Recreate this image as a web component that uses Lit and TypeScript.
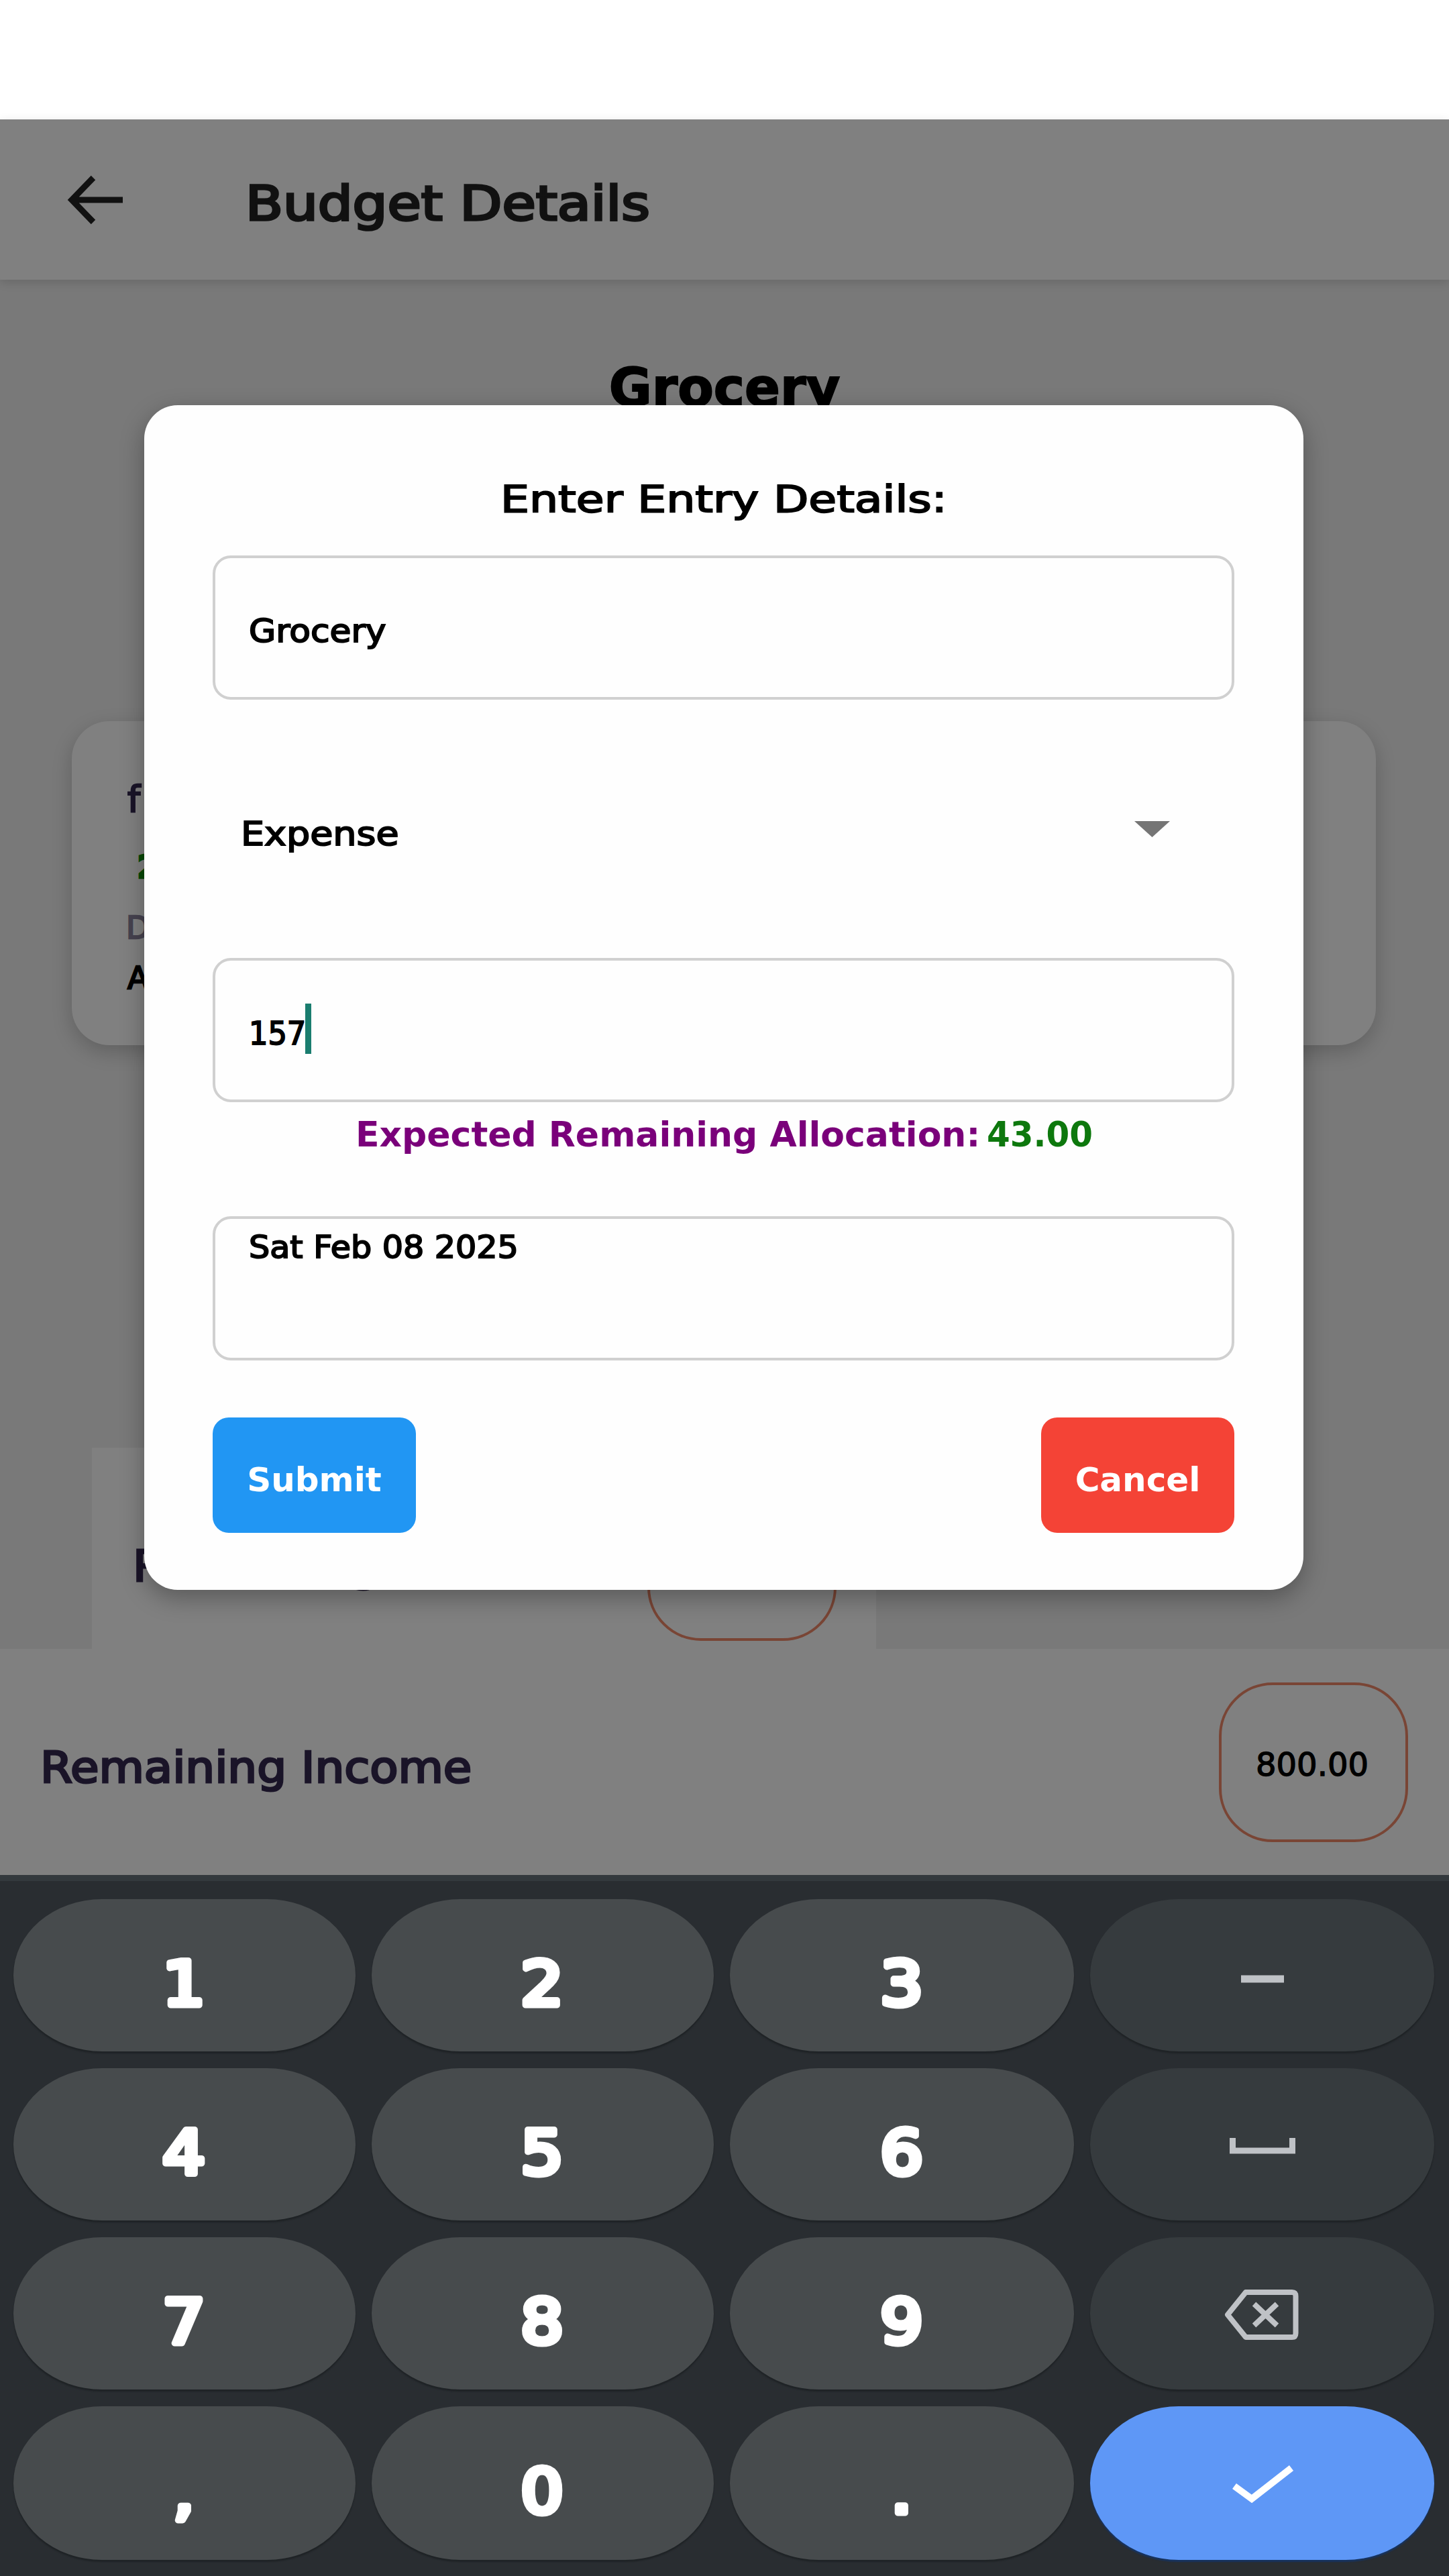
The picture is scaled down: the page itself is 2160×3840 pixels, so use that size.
import { LitElement, html, css, svg } from "lit";
import { customElement } from "lit/decorators.js";

const ICONS: Record<string, unknown> = {
  minus: svg`<path d="M68 65H132" stroke-width="11" />`,
  space: svg`<path d="M55.500 50V69H144.500V50" stroke-width="9" />`,
  backspace: svg`<path d="M75 28H144Q149.500 28 149.500 34V89Q149.500 95 144 95H75L48 61.500Z" stroke-width="8" stroke-linejoin="round" /><path d="M87.500 45.500L121.500 77.500M121.500 45.500L87.500 77.500" stroke-width="8" />`,
  check: svg`<path d="M58 64L84 83L143 37" stroke-width="10" />`,
};

const KEYS = [
  "1", "2", "3", "minus",
  "4", "5", "6", "space",
  "7", "8", "9", "backspace",
  ",", "0", ".", "check",
];

@customElement("number-pad")
class NumberPad extends LitElement {
  static styles = css`
    :host {
      display: grid;
      box-sizing: border-box;
      height: 1045px;
      padding: 27px 22px 0 20px;
      border-top: 9px solid #33393d;
      background: #292d31;
      grid-template-columns: 510px 510px 513px 513px;
      grid-template-rows: 227px 227px 227px 229px;
      gap: 25px 24px;
    }
    .key {
      display: flex;
      align-items: center;
      justify-content: center;
      box-sizing: border-box;
      border-radius: 132px / 50%;
      background: #474b4d;
      box-shadow: 0 3px 2px #1f2326;
      color: #fff;
    }
    .tool {
      background: #363b3e;
      color: #bfc2c6;
    }
    .enter {
      background: #5e97f6;
      color: #fff;
      box-shadow: 0 3px 2px #17335f;
    }
    .icon {
      width: 200px;
      height: 120px;
      fill: none;
      stroke: currentColor;
    }
    .digit {
      width: 200px;
      height: 227px;
      fill: currentColor;
      stroke: currentColor;
      stroke-width: 9px;
      stroke-linejoin: round;
      font: 91px "DejaVu Sans", sans-serif;
      text-anchor: middle;
    }
  `;
  render() {
    return KEYS.map((k) =>
      ICONS[k]
        ? html`<div class="key ${k === "check" ? "enter" : "tool"}"><svg class="icon" viewBox="0 0 200 120">${ICONS[k]}</svg></div>`
        : html`<div class="key">
            <svg class="digit" viewBox="0 0 200 227"><text transform="translate(99 158) scale(1.1 1)">${k}</text></svg>
          </div>`
    );
  }
}

@customElement("entry-dialog")
class EntryDialog extends LitElement {
  static styles = css`
    :host {
      display: flex;
      flex-direction: column;
      box-sizing: border-box;
      width: 1728px;
      height: 1766px;
      padding: 100px 103px 0 102px;
      border-radius: 50px;
      background: #fefefe;
      box-shadow: 0 12px 36px rgba(0, 0, 0, 0.3);
      color: #000;
      font-family: "DejaVu Sans", sans-serif;
      -webkit-text-stroke: 2px currentColor;
    }
    span {
      display: inline-block;
      white-space: nowrap;
      transform-origin: left;
    }
    .title {
      padding-left: 429px;
      font-size: 56px;
      line-height: 80px;
      margin-bottom: 44px;
    }
    .title span {
      transform: scaleX(1.215);
    }
    .input {
      display: flex;
      align-items: center;
      box-sizing: border-box;
      height: 215px;
      border: 4px solid #d0d0d0;
      border-radius: 27px;
      padding: 8px 0 0 50px;
      font-size: 48px;
    }
    .name span {
      transform: scaleX(1.08);
    }
    .amount span {
      width: 84px;
      transform: scaleX(0.93);
    }
    .caret {
      width: 9px;
      height: 75px;
      margin: -12px 0 0 0;
      background: #1a7d6f;
    }
    .select {
      display: flex;
      align-items: center;
      justify-content: space-between;
      height: 385px;
      padding: 0 96px 0 42px;
      font-size: 50px;
    }
    .select span {
      padding-top: 14px;
      transform: scaleX(1.11);
    }
    .select svg {
      width: 53px;
      height: 24px;
    }
    .hint {
      display: flex;
      gap: 10px;
      padding-left: 213px;
      margin-bottom: 74px;
      font-size: 52px;
      font-weight: bold;
      line-height: 96px;
      color: #7a007a;
      -webkit-text-stroke: 0;
    }
    .left {
      color: #0d780d;
      transform: scaleX(0.96);
    }
    .date {
      align-items: flex-start;
      padding-top: 0;
      font-size: 47px;
      line-height: 83px;
    }
    .date span {
      transform: scaleX(1.045);
    }
    .actions {
      display: flex;
      justify-content: space-between;
      margin-top: 85px;
    }
    .button {
      display: flex;
      align-items: center;
      justify-content: center;
      box-sizing: border-box;
      width: 303px;
      height: 172px;
      padding-top: 14px;
      border-radius: 24px;
      background: #2196f3;
      color: #fff;
      font-size: 50px;
      font-weight: bold;
      -webkit-text-stroke: 0;
    }
    .cancel {
      width: 288px;
      background: #f44336;
    }
  `;
  render() {
    return html`
      <div class="title"><span>Enter Entry Details:</span></div>
      <div class="input name"><span>Grocery</span></div>
      <div class="select">
        <span>Expense</span>
        <svg viewBox="0 0 53 24"><path d="M0 0H53L26.500 24Z" fill="#757575" /></svg>
      </div>
      <div class="input amount"><span>157</span><div class="caret"></div></div>
      <div class="hint"><span>Expected Remaining Allocation:</span><span class="left">43.00</span></div>
      <div class="input date"><span>Sat Feb 08 2025</span></div>
      <div class="actions">
        <div class="button">Submit</div>
        <div class="button cancel">Cancel</div>
      </div>
    `;
  }
}

@customElement("app-root")
class AppRoot extends LitElement {
  static styles = css`
    :host {
      display: flex;
      flex-direction: column;
      position: relative;
      width: 2160px;
      height: 3840px;
      overflow: hidden;
      background: #797979;
      color: #000;
      font-family: "DejaVu Sans", sans-serif;
    }
    .status {
      height: 178px;
      background: #fff;
    }
    .header {
      display: flex;
      align-items: center;
      box-sizing: border-box;
      height: 239px;
      padding-left: 97px;
      background: #808080;
      box-shadow: 0 4px 14px rgba(0, 0, 0, 0.14);
      color: #111;
    }
    .back {
      width: 90px;
      height: 80px;
      fill: none;
      stroke: #111;
      stroke-width: 9;
    }
    .heading {
      margin-left: 179px;
      padding-top: 12px;
      font-size: 71px;
      -webkit-text-stroke: 3.5px currentColor;
      transform: scaleX(1.15);
      transform-origin: left;
    }
    .content {
      height: 2378px;
    }
    .name {
      padding-top: 116px;
      font-size: 78px;
      line-height: 90px;
      font-weight: bold;
      text-align: center;
      -webkit-text-stroke: 2px currentColor;
    }
    .card {
      box-sizing: border-box;
      height: 483px;
      margin: 452px 109px 600px 107px;
      padding: 67px 0 0 79px;
      border-radius: 56px;
      background: #808080;
      box-shadow: 0 10px 30px rgba(0, 0, 0, 0.2);
      -webkit-text-stroke: 2.4px currentColor;
    }
    .entry {
      padding-left: 4px;
      font-size: 54px;
      line-height: 100px;
      color: #1a1428;
    }
    .value {
      padding-left: 18px;
      font-size: 48px;
      font-weight: bold;
      line-height: 101px;
      color: #064806;
    }
    .date {
      padding-left: 2px;
      font-size: 46px;
      line-height: 80px;
      color: #46424f;
    }
    .note {
      padding-left: 4px;
      font-size: 46px;
      line-height: 70px;
    }
    .row {
      display: flex;
      justify-content: space-between;
      align-items: flex-start;
      box-sizing: border-box;
      background: #808080;
      color: #1a1428;
    }
    .allocation {
      width: 1169px;
      height: 300px;
      margin-left: 137px;
      padding: 50px 59px 0 61px;
    }
    .income {
      height: 337px;
      padding: 50px 61px 0 60px;
    }
    .label {
      margin-top: 28px;
      font-size: 64px;
      line-height: 198px;
      -webkit-text-stroke: 3px currentColor;
      transform: scaleX(1.08);
      transform-origin: left;
    }
    .pill {
      display: flex;
      align-items: center;
      justify-content: center;
      box-sizing: border-box;
      width: 282px;
      height: 238px;
      padding: 6px 4px 0 0;
      border: 4px solid #794535;
      border-radius: 80px;
      color: #000;
      font-size: 48px;
      -webkit-text-stroke: 1.4px currentColor;
    }
    entry-dialog {
      position: absolute;
      left: 215px;
      top: 604px;
    }
  `;
  render() {
    return html`
      <div class="status"></div>
      <div class="header">
        <svg class="back" viewBox="0 0 90 80"><path d="M42 7L10 40L42 73M10 40H86" /></svg>
        <div class="heading">Budget Details</div>
      </div>
      <div class="content">
        <div class="name">Grocery</div>
        <div class="card">
          <div class="entry">f</div>
          <div class="value">2</div>
          <div class="date">D</div>
          <div class="note">A</div>
        </div>
        <div class="row allocation"><div class="label">Remaining</div><div class="pill"></div></div>
        <div class="row income"><div class="label">Remaining Income</div><div class="pill">800.00</div></div>
      </div>
      <number-pad></number-pad>
      <entry-dialog></entry-dialog>
    `;
  }
}
